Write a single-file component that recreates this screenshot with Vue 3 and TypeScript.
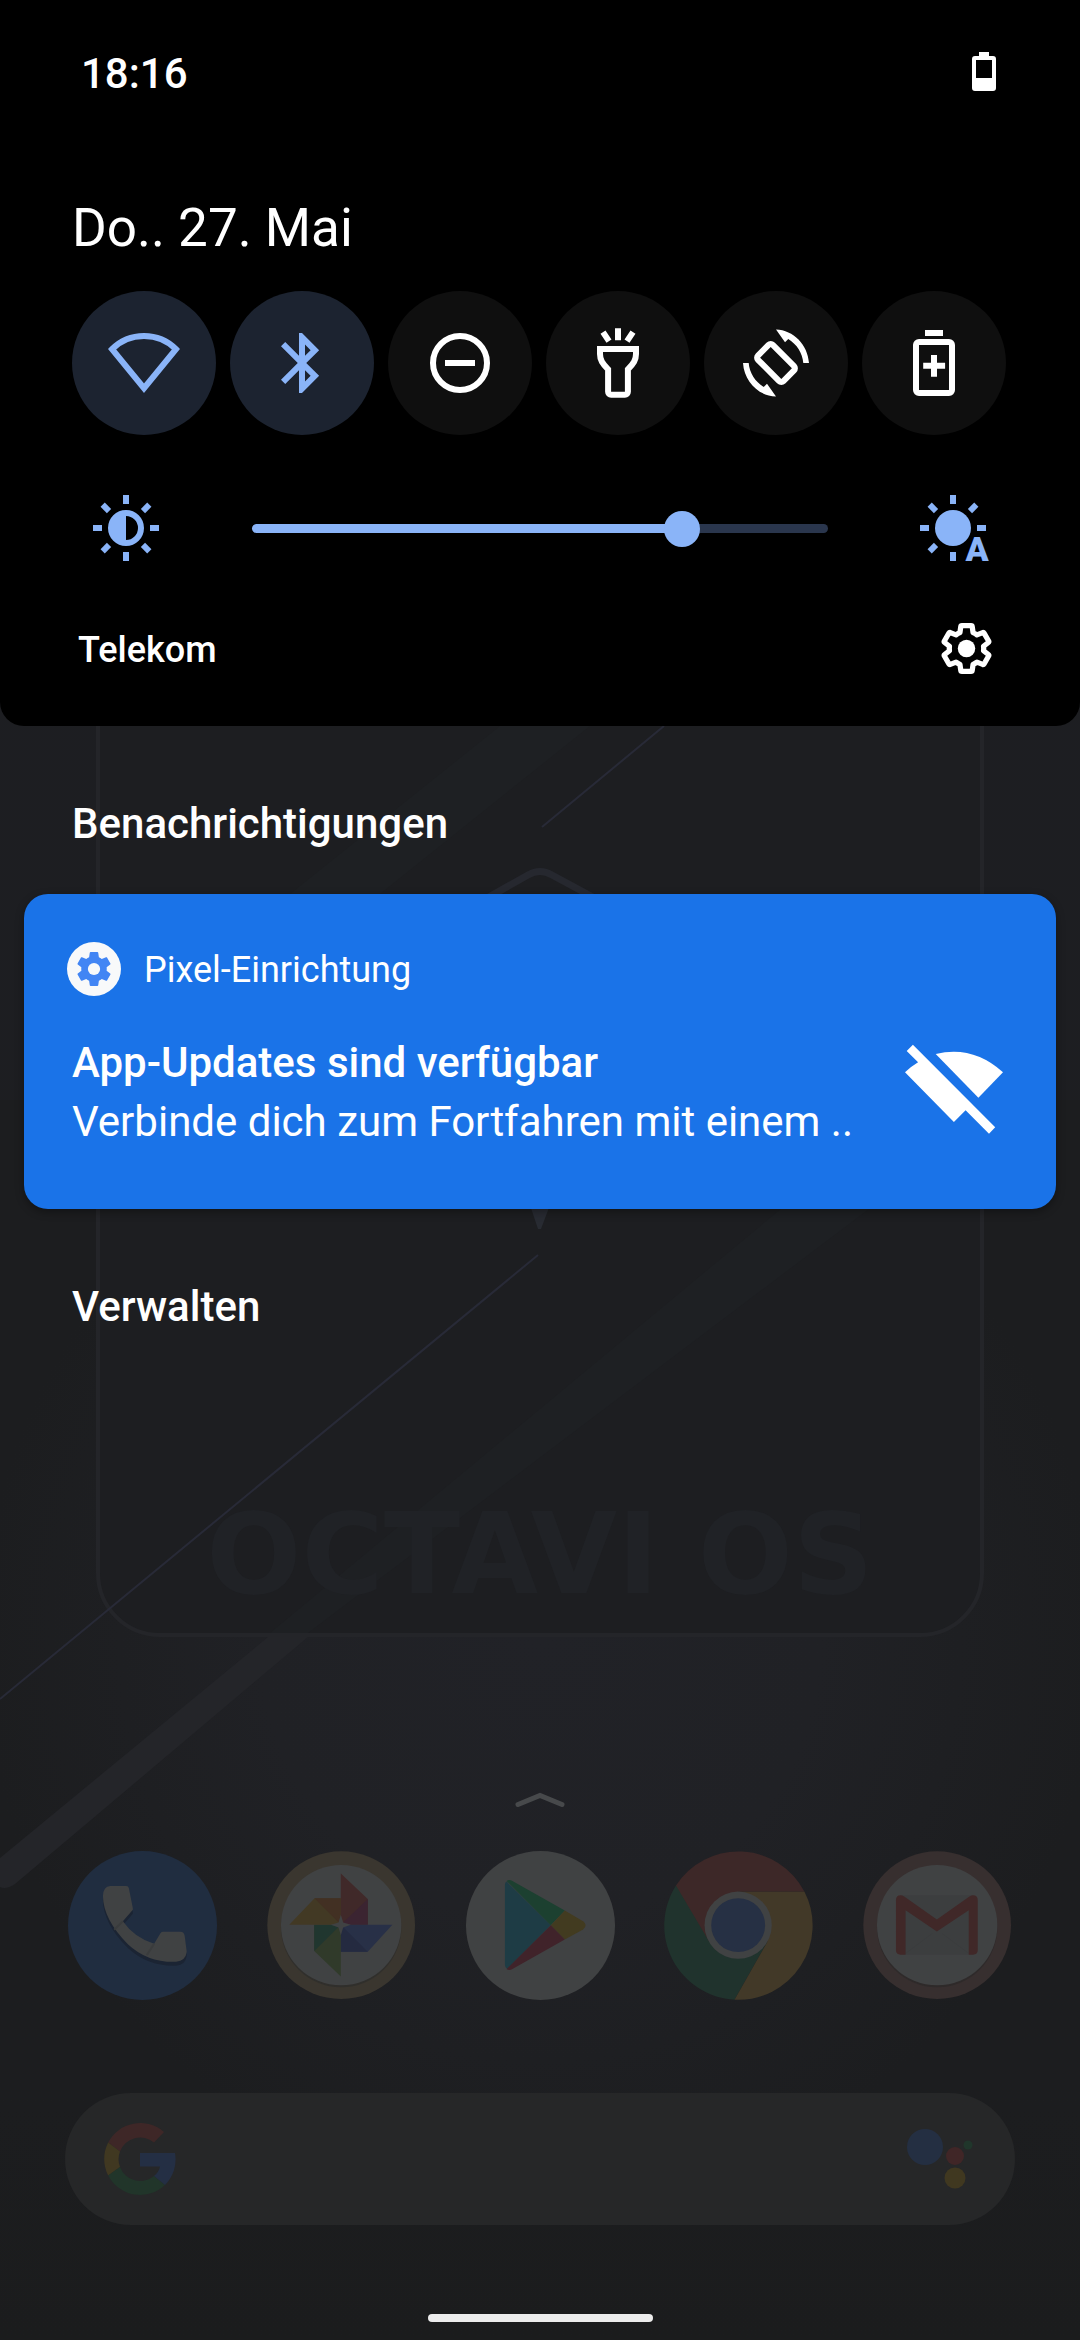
<script setup lang="ts">
import { computed, ref } from 'vue'

type TileName = 'wifi' | 'bluetooth' | 'dnd' | 'torch' | 'rotate' | 'saver'

interface Tile {
  name: TileName
  label: string
  active: boolean
}

const tiles = ref<Tile[]>([
  { name: 'wifi', label: 'WLAN', active: true },
  { name: 'bluetooth', label: 'Bluetooth', active: true },
  { name: 'dnd', label: 'Bitte nicht stören', active: false },
  { name: 'torch', label: 'Taschenlampe', active: false },
  { name: 'rotate', label: 'Automatisch drehen', active: false },
  { name: 'saver', label: 'Energiesparmodus', active: false },
])

const brightness = ref(763)
const trackFill = computed(() => `${brightness.value / 10}%`)

const rays = [0, 45, 90, 135, 180, 225, 270, 315]
const autoRays = rays.filter((angle) => angle !== 135)

const gearPath =
  'M19.43 12.98c.04-.32.07-.64.07-.98 0-.34-.03-.66-.07-.98l2.11-1.65c.19-.15.24-.42.12-.64l-2-3.46c-.09-.16-.26-.25-.44-.25-.06 0-.12.01-.17.03l-2.49 1c-.52-.4-1.08-.73-1.69-.98l-.38-2.65C14.46 2.18 14.25 2 14 2h-4c-.25 0-.46.18-.49.42l-.38 2.65c-.61.25-1.17.59-1.69.98l-2.49-1c-.06-.02-.12-.03-.18-.03-.17 0-.34.09-.43.25l-2 3.46c-.13.22-.07.49.12.64l2.11 1.65c-.04.32-.07.65-.07.98 0 .33.03.66.07.98l-2.11 1.65c-.19.15-.24.42-.12.64l2 3.46c.09.16.26.25.44.25.06 0 .12-.01.17-.03l2.49-1c.52.4 1.08.73 1.69.98l.38 2.65c.03.24.24.42.49.42h4c.25 0 .46-.18.49-.42l.38-2.65c.61-.25 1.17-.59 1.69-.98l2.49 1c.06.02.12.03.18.03.17 0 .34-.09.43-.25l2-3.46c.12-.22.07-.49-.12-.64l-2.11-1.65z'
</script>

<template>
  <div class="screen">
    <svg class="wallpaper" viewBox="0 0 1080 2340" preserveAspectRatio="xMidYMin slice" aria-hidden="true">
      <defs>
        <radialGradient id="glow" gradientUnits="userSpaceOnUse" cx="540" cy="1640" r="560">
          <stop offset="0" stop-color="#212227" />
          <stop offset="0.5" stop-color="#202125" />
          <stop offset="1" stop-color="#1c1d1f" />
        </radialGradient>
        <linearGradient id="fade" x1="0" y1="0" x2="0" y2="1">
          <stop offset="0" stop-color="#1d1e22" />
          <stop offset="0.8" stop-color="#1d1e21" />
          <stop offset="1" stop-color="#1b1c1d" />
        </linearGradient>
      </defs>
      <rect width="1080" height="2340" fill="url(#fade)" />
      <rect y="1100" width="1080" height="1000" fill="url(#glow)" />
      <path d="M0 1858L268 1637h40L15 1884Q6 1890 0 1887z" fill="#242529" />
      <rect x="98" y="500" width="884" height="1135" rx="62" fill="#1d1e21" stroke="#242529" stroke-width="4" />
      <path d="M270 1633L900 1110h100L308 1633zM290 894L500 726h90L380 894z" fill="#1e2023" />
      <text class="wordmark" x="540" y="1593" text-anchor="middle">OCTAVI OS</text>
      <path d="M0 1699L538 1255M542 827L664 726" fill="none" stroke="#282a37" stroke-width="2" />
      <path d="M480 902L528 875Q540 868 552 875L602 902" fill="none" stroke="#26282f" stroke-width="7" />
      <path d="M530 1205h20l-9 24h-3z" fill="#282b32" />
    </svg>

    <header class="panel">
      <div class="status">
        <time datetime="18:16">18:16</time>
        <svg class="battery" viewBox="0 0 24 39" role="img" aria-label="Akku">
          <path fill-rule="evenodd" d="M7 0h10v4h4q3 0 3 3v29q0 3-3 3H3q-3 0-3-3V7q0-3 3-3h4zM4 8v18h16V8z" />
        </svg>
      </div>
      <div class="date">Do.. 27. Mai</div>

      <div class="tiles">
        <button
          v-for="tile in tiles"
          :key="tile.name"
          type="button"
          class="tile"
          :class="{ active: tile.active }"
          :aria-label="tile.label"
          :aria-pressed="tile.active"
          @click="tile.active = !tile.active"
        >
          <svg class="glyph" viewBox="0 0 24 24" aria-hidden="true">
            <path v-if="tile.name === 'wifi'" class="line" d="M1.35 7.4C4.2 4.5 8 3 12 3s7.8 1.5 10.65 4.4L12 20.4z" />
            <path
              v-else-if="tile.name === 'bluetooth'"
              d="M17.71 7.71L12 2h-1v7.59L6.41 5 5 6.41 10.59 12 5 17.59 6.41 19 11 14.41V22h1l5.71-5.71-4.3-4.29 4.3-4.29zM13 5.83l1.88 1.88L13 9.59V5.83zm1.88 10.46L13 18.17v-3.76l1.88 1.88z"
            />
            <g v-else-if="tile.name === 'dnd'">
              <circle class="line" cx="12" cy="12" r="9" />
              <path d="M7 11h10v2H7z" />
            </g>
            <path
              v-else-if="tile.name === 'torch'"
              class="line"
              d="M12 .4v4M7 1.7l2 3M17 1.7l-2 3M6 7.3h12V9c0 2-.8 3.2-2.7 5.1v7.5a1 1 0 0 1-1 1H9.7a1 1 0 0 1-1-1v-7.5C6.8 12.2 6 11 6 9z"
            />
            <g v-else-if="tile.name === 'rotate'">
              <rect class="line" x="6" y="8.5" width="12" height="7" rx="1" transform="rotate(45 12 12)" />
              <path d="M12 .8C17.8 1 22.6 5.8 23 12h-1.9C20.8 8.7 19 5.8 16.1 4L15 5.1z" />
              <path d="M12 .8C17.8 1 22.6 5.8 23 12h-1.9C20.8 8.7 19 5.8 16.1 4L15 5.1z" transform="rotate(180 12 12)" />
            </g>
            <g v-else>
              <rect class="line" x="6" y="5" width="12" height="17" rx="1" />
              <path d="M9 1h6v2H9zM11 9.3h2v2.6h2.7v2H13v2.7h-2v-2.7H8.4v-2H11z" />
            </g>
          </svg>
        </button>
      </div>

      <div class="brightness">
        <svg class="sun" viewBox="0 0 72 72" aria-hidden="true">
          <path v-for="angle in rays" :key="angle" d="M33 3h6v9h-6z" :transform="`rotate(${angle} 36 36)`" />
          <path fill-rule="evenodd" d="M36 18a18 18 0 1 1 0 36a18 18 0 1 1 0-36zM36 24v24a12 12 0 0 0 0-24z" />
        </svg>
        <input
          v-model.number="brightness"
          class="slider"
          type="range"
          min="0"
          max="1000"
          aria-label="Displayhelligkeit"
          :style="{ '--fill': trackFill }"
        />
        <button class="auto" type="button" aria-label="Automatische Helligkeit">
          <svg class="sun" viewBox="0 0 72 72" aria-hidden="true">
            <path v-for="angle in autoRays" :key="angle" d="M33 3h6v9h-6z" :transform="`rotate(${angle} 36 36)`" />
            <circle cx="36" cy="36" r="18" />
            <text class="auto-letter" x="60" y="69" text-anchor="middle">A</text>
          </svg>
        </button>
      </div>

      <div class="footer">
        <span class="carrier">Telekom</span>
        <button class="settings" type="button" aria-label="Einstellungen">
          <svg viewBox="0 0 24 24" aria-hidden="true">
            <path class="gear-line" :d="gearPath" />
            <circle cx="12" cy="12" r="3.8" />
          </svg>
        </button>
      </div>
    </header>

    <main class="notifications">
      <h2 class="heading">Benachrichtigungen</h2>
      <article class="card">
        <div class="card-head">
          <svg class="app-icon" viewBox="0 0 54 54" aria-hidden="true">
            <circle cx="27" cy="27" r="27" fill="#f8f9fa" />
            <g transform="translate(6.6 6.6) scale(1.7)">
              <path :d="gearPath" fill="#4285f4" />
              <circle cx="12" cy="12" r="3.6" fill="#f8f9fa" />
            </g>
          </svg>
          <span class="app-name">Pixel-Einrichtung</span>
        </div>
        <div class="card-body">
          <div class="card-text">
            <h3>App-Updates sind verfügbar</h3>
            <p>Verbinde dich zum Fortfahren mit einem ..</p>
          </div>
          <svg class="wifi-off" viewBox="905 1044 98 96" aria-hidden="true">
            <path d="M912.9 1044.7L906.7 1051L918.1 1062.3Q911 1066.5 905 1072.3L953.9 1122L965.6 1110.3L989 1133.7L995.2 1127.3z" />
            <path d="M935.7 1054Q973 1045 1003 1072.3L978.4 1097.7z" />
          </svg>
        </div>
      </article>
      <button class="manage" type="button">Verwalten</button>
    </main>

    <footer class="home">
      <svg class="chevron" viewBox="0 0 54 18" aria-hidden="true">
        <path d="M5 13.5L27 4.5L49 13.5" />
      </svg>

      <nav class="dock">
        <a href="#phone" aria-label="Telefon">
          <svg viewBox="0 0 448 448">
            <circle cx="224" cy="224" r="224" fill="#202d40" />
            <path
              d="M127 105H175Q182 105 183 112L195 172V177L165 211Q198 259 259 279L278 247Q281 243 286 243H338Q349 243 351 256L357 303Q354 330 325 333Q240 336 180 280Q106 205 105 135Q106 107 127 105Z"
              fill="#1b2433"
              transform="translate(0 12)"
            />
            <path
              d="M127 105H175Q182 105 183 112L195 172V177L165 211Q198 259 259 279L278 247Q281 243 286 243H338Q349 243 351 256L357 303Q354 330 325 333Q240 336 180 280Q106 205 105 135Q106 107 127 105Z"
              fill="#404243"
            />
            <path d="M165 211l-26 26M259 279l-22 34" stroke="#3a3c3d" stroke-width="6" />
          </svg>
        </a>
        <a href="#photos" aria-label="Fotos">
          <svg viewBox="0 0 448 448">
            <circle cx="223" cy="223" r="222" fill="#3a362f" />
            <circle cx="223" cy="229" r="181" fill="#302f2c" />
            <circle cx="223" cy="223" r="181" fill="#404243" />
            <path d="M222 68l81 76v78h-81z" fill="#402929" />
            <path d="M303 144v78h-81z" fill="#3b2431" />
            <path d="M222 222h155l-74 81h-81z" fill="#283047" />
            <path d="M222 222l81 81h-81z" fill="#242a40" />
            <path d="M222 222v155l-80-76v-79z" fill="#303a2a" />
            <path d="M142 222v79l80-79z" fill="#20362f" />
            <path d="M222 222H67l76-80h79z" fill="#423924" />
            <path d="M143 142h79v80z" fill="#423023" />
            <path d="M222 192l7 23 23 7-23 8-7 23-7-23-23-8 23-7z" fill="#404243" />
          </svg>
        </a>
        <a href="#play" aria-label="Play Store">
          <svg viewBox="0 0 448 448">
            <circle cx="224" cy="224" r="224" fill="#404243" />
            <path d="M122 92L255 223L124 355Q117 352 117 342V102Q117 95 122 92z" fill="#1e3c45" />
            <path d="M122 90Q130 84 141 91L297 179L255 223z" fill="#1c4030" />
            <path d="M297 179L352 211Q368 223 352 236L297 266L255 223z" fill="#423b20" />
            <path d="M255 223L297 266L141 354Q130 361 122 355z" fill="#40232a" />
          </svg>
        </a>
        <a href="#chrome" aria-label="Chrome">
          <svg viewBox="0 0 448 448">
            <path d="M223 223L36 104A223 223 0 0 0 212 447L311 273z" fill="#20332d" />
            <path d="M223 122H422A223 223 0 0 1 212 447L311 273z" fill="#423928" />
            <path d="M36 104A223 223 0 0 1 422 122H223L136 273z" fill="#3d2828" />
            <circle cx="223" cy="223" r="101" fill="#404243" />
            <circle cx="223" cy="223" r="81" fill="#263044" />
          </svg>
        </a>
        <a href="#gmail" aria-label="Gmail">
          <svg viewBox="0 0 448 448">
            <circle cx="223" cy="223" r="222" fill="#372f2f" />
            <circle cx="223" cy="229" r="181" fill="#2e2a2a" />
            <circle cx="223" cy="223" r="181" fill="#404243" />
            <path d="M113 133h218v179H113z" fill="#3c3e3f" />
            <path d="M128 308l80-60M318 308l-80-60" stroke="#393b3c" stroke-width="2" />
            <path
              d="M99 148Q99 133 113 133Q118 133 124 137L222 206L320 137Q326 133 331 133Q345 133 345 148V298Q345 312 331 312H318V178L222 242L128 178V312H113Q99 312 99 298z"
              fill="#402828"
            />
          </svg>
        </a>
      </nav>

      <form class="search" role="search" @submit.prevent>
        <svg class="google" viewBox="0 0 72 72" aria-hidden="true">
          <path d="M4.2 19.5A36 36 0 0 1 60 9L50 19.5A21.5 21.5 0 0 0 16 28.5z" fill="#3e2727" />
          <path d="M4.2 19.5A36 36 0 0 0 4.2 52.5L16 44A21.5 21.5 0 0 1 16 28.5z" fill="#403821" />
          <path d="M4.2 52.5A36 36 0 0 0 61 62L50 53A21.5 21.5 0 0 1 16 44z" fill="#21352a" />
          <path d="M36 30H71A36 36 0 0 1 61 62L50 53Q55 49 56 43.5H36z" fill="#242f44" />
        </svg>
        <input class="query" type="search" aria-label="Suche" />
        <button class="assistant" type="button" aria-label="Assistant">
          <svg viewBox="906 2126 66 66" aria-hidden="true">
            <circle cx="924" cy="2147" r="18" fill="#242f42" />
            <circle cx="954" cy="2156" r="9" fill="#402627" />
            <circle cx="967" cy="2145" r="4.5" fill="#20362b" />
            <circle cx="954" cy="2178" r="10.5" fill="#403820" />
          </svg>
        </button>
      </form>

      <div class="nav-handle"></div>
    </footer>
  </div>
</template>

<style>
body {
  background: #1b1c1e;
}
</style>

<style scoped>
.screen {
  position: relative;
  display: flex;
  flex-direction: column;
  min-height: 100vh;
  overflow: hidden;
  color: #fff;
  font-family: Roboto, 'Liberation Sans', sans-serif;
}

.screen > * {
  position: relative;
}

.screen > .wallpaper {
  position: absolute;
  inset: 0;
  width: 100%;
  height: 100%;
}

.wordmark {
  font-family: 'DejaVu Sans', sans-serif;
  font-size: 112px;
  font-weight: 700;
  fill: #202226;
}

button {
  display: block;
  padding: 0;
  border: 0;
  background: none;
  color: inherit;
  font: inherit;
}

svg {
  display: block;
}

.panel {
  padding: 48px 74px 48px 72px;
  border-radius: 0 0 24px 24px;
  background: #000;
}

.status {
  display: flex;
  align-items: flex-start;
  justify-content: space-between;
  padding: 0 10px 0 9px;
  font-size: 42px;
  font-weight: 500;
  line-height: 52px;
}

.battery {
  width: 24px;
  height: 39px;
  margin-top: 4px;
  fill: #fff;
}

.date {
  margin-top: 96px;
  font-size: 53px;
  line-height: 64px;
}

.tiles {
  display: flex;
  justify-content: space-between;
  margin-top: 31px;
}

.tile {
  display: grid;
  place-items: center;
  width: 144px;
  height: 144px;
  border-radius: 50%;
  background: #0f0f0f;
  color: #fff;
}

.tile.active {
  background: #1c2330;
  color: #8ab4f8;
}

.glyph {
  width: 72px;
  height: 72px;
  fill: currentColor;
}

.line {
  fill: none;
  stroke: currentColor;
  stroke-width: 2;
}

.brightness {
  display: flex;
  align-items: center;
  margin-top: 57px;
  padding: 0 17px 0 18px;
}

.sun {
  width: 72px;
  height: 72px;
  overflow: visible;
  fill: #8ab4f8;
}

.auto-letter {
  font-size: 34px;
  font-weight: 900;
}

.slider {
  flex: 1;
  min-width: 0;
  height: 36px;
  margin: 0 89px 0 90px;
  appearance: none;
  background: none;
}

.slider::-webkit-slider-runnable-track {
  height: 9px;
  border-radius: 5px;
  background: linear-gradient(to right, #8ab4f8 var(--fill), #2a364d var(--fill));
}

.slider::-webkit-slider-thumb {
  width: 36px;
  height: 36px;
  margin-top: -13px;
  border-radius: 50%;
  appearance: none;
  background: #8ab4f8;
}

.footer {
  display: flex;
  align-items: center;
  justify-content: space-between;
  height: 60px;
  margin-top: 54px;
  padding: 0 12px 0 6px;
}

.carrier {
  padding-top: 4px;
  font-size: 36px;
  font-weight: 500;
}

.settings svg {
  width: 55px;
  height: 55px;
  overflow: visible;
  fill: #fff;
}

.settings .gear-line {
  fill: none;
  stroke: #fff;
  stroke-width: 2.3;
  stroke-linejoin: round;
}

.notifications {
  padding: 74px 24px 0;
}

.heading,
.manage {
  margin: 0 48px;
  font-size: 42px;
  font-weight: 500;
  line-height: 48px;
}

.card {
  margin: 46px 0 74px;
  padding: 48px 53px 58px 43px;
  border-radius: 24px;
  background: #1a73e8;
  box-shadow: 0 3px 9px rgba(0, 0, 0, 0.35);
}

.card-head {
  display: flex;
  align-items: flex-start;
  gap: 23px;
}

.app-icon {
  width: 54px;
  height: 54px;
}

.app-name {
  font-size: 36px;
  line-height: 57px;
}

.card-body {
  display: flex;
  align-items: center;
  justify-content: space-between;
  margin-top: 34px;
  padding-left: 5px;
}

.card-text {
  min-width: 0;
  font-size: 42px;
  line-height: 59px;
}

.card-text h3,
.card-text p {
  margin: 0;
  font-size: inherit;
  font-weight: 400;
}

.card-text h3 {
  font-weight: 500;
}

.wifi-off {
  flex: none;
  width: 98px;
  height: 96px;
  fill: #fff;
}

.home {
  display: flex;
  flex-direction: column;
  align-items: center;
  margin-top: auto;
  padding: 48px 65px 18px;
}

.chevron {
  width: 54px;
  height: 18px;
  fill: none;
  stroke: #47494b;
  stroke-width: 5;
  stroke-linecap: round;
}

.dock {
  display: flex;
  justify-content: space-between;
  align-self: stretch;
  margin-top: 42px;
  padding: 0 3px;
}

.dock svg {
  width: 149px;
  height: 149px;
}

.search {
  display: flex;
  align-items: center;
  align-self: stretch;
  height: 132px;
  margin-top: 93px;
  padding: 0 42px 0 39px;
  border-radius: 66px;
  background: #262728;
}

.google {
  width: 72px;
  height: 72px;
}

.query {
  flex: 1;
  min-width: 0;
  height: 100%;
  margin: 0 24px;
  border: 0;
  background: none;
  color: #8a8b8c;
  font: inherit;
  font-size: 42px;
}

.assistant svg {
  width: 66px;
  height: 66px;
}

.nav-handle {
  width: 225px;
  height: 8px;
  margin-top: 89px;
  border-radius: 4px;
  background: #ececec;
}
</style>
